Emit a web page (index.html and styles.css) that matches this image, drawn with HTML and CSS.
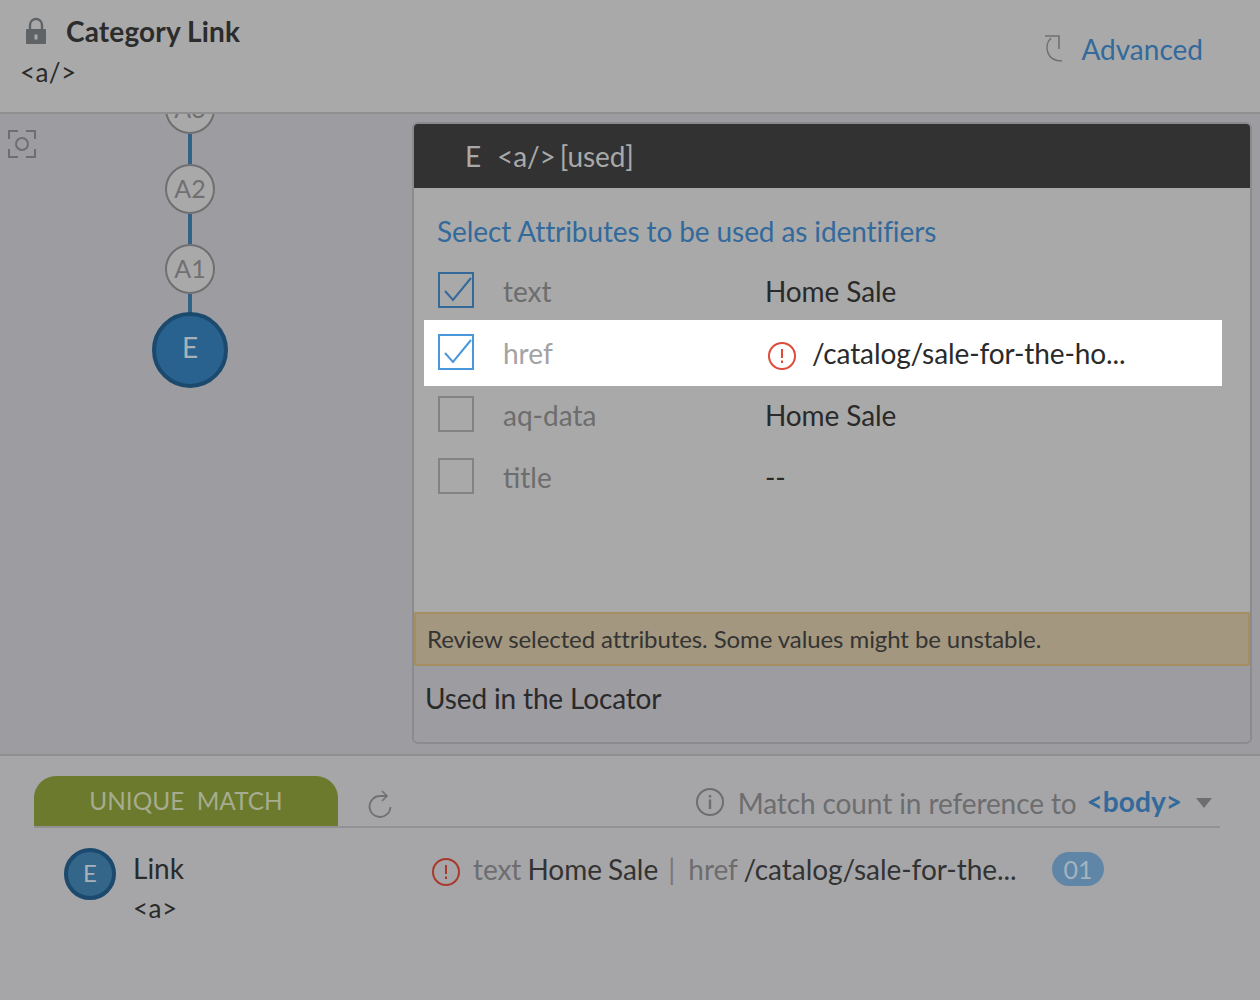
FILE: index.html
```html
<!DOCTYPE html>
<html lang="en">
<head>
<meta charset="utf-8">
<title>Category Link</title>
<link rel="stylesheet" href="styles.css">
</head>
<body>
<div class="page">
  <header class="top">
    <div class="top-left">
      <div class="title-row">
        <svg class="lock" viewBox="0 0 22 28" width="22" height="28"><path d="M5 13V8a6 6 0 0 1 12 0v5" fill="none" stroke="#5f6366" stroke-width="2.4"/><path fill-rule="evenodd" d="M2 12h18a1 1 0 0 1 1 1v13a1 1 0 0 1-1 1H2a1 1 0 0 1-1-1V13a1 1 0 0 1 1-1zm7.500 5.500v5h3v-5z" fill="#5f6366"/></svg>
        <span class="title">Category Link</span>
      </div>
      <div class="tag">&lt;a/&gt;</div>
    </div>
    <div class="advanced">
      <svg class="undo" viewBox="0 0 18 28" width="18" height="28"><path d="M0 1H14V14" fill="none" stroke="#707070" stroke-width="1.600"/><path d="M6 3C2 7 1 13 3 18C5 23 10 26 17 26" fill="none" stroke="#707070" stroke-width="1.600"/></svg>
      <span>Advanced</span>
    </div>
  </header>

  <main class="main">
    <aside class="graph">
      <svg class="focus" viewBox="0 0 28 28" width="28" height="28"><path d="M1 9V1h9M18 1h9v8M1 19v8h9M18 27h9v-8" fill="none" stroke="#6d6e72" stroke-width="2"/><circle cx="14" cy="14" r="6" fill="none" stroke="#6d6e72" stroke-width="2"/></svg>
      <div class="chain">
        <div class="node">A3</div>
        <div class="link"></div>
        <div class="node">A2</div>
        <div class="link"></div>
        <div class="node">A1</div>
        <div class="link short"></div>
        <div class="node-e">E</div>
      </div>
    </aside>

    <section class="panel">
      <div class="panel-head"><span class="head-e">E</span><span>&lt;a/&gt; [used]</span></div>
      <div class="panel-body">
        <h2 class="select-title">Select Attributes to be used as identifiers</h2>
        <div class="rows">
          <div class="row">
            <span class="check dark"><svg viewBox="0 0 36 36" width="36" height="36"><path d="M7 19l8 9L33 6" fill="none" stroke="#34699a" stroke-width="2"/></svg></span>
            <span class="key">text</span><span class="val">Home Sale</span>
          </div>
          <div class="row hl">
            <span class="check light"><svg viewBox="0 0 36 36" width="36" height="36"><path d="M7 19l8 9L33 6" fill="none" stroke="#4a98dc" stroke-width="2"/></svg></span>
            <span class="key">href</span>
            <span class="val warn-val"><svg class="warn" viewBox="0 0 28 28" width="28" height="28"><circle cx="14" cy="14" r="13" fill="none" stroke="#dd4b39" stroke-width="2"/><path d="M14 7v9M14 18.500v2.500" fill="none" stroke="#dd4b39" stroke-width="2"/></svg>/catalog/sale-for-the-ho...</span>
          </div>
          <div class="row">
            <span class="check"></span>
            <span class="key">aq-data</span><span class="val">Home Sale</span>
          </div>
          <div class="row">
            <span class="check"></span>
            <span class="key">title</span><span class="val">--</span>
          </div>
        </div>
      </div>
      <div class="notice">Review selected attributes. Some values might be unstable.</div>
      <div class="used">Used in the Locator</div>
    </section>
  </main>

  <footer class="bottom">
    <div class="tabs">
      <div class="tab">UNIQUE&nbsp; MATCH</div>
      <svg class="refresh" viewBox="0 0 24 28" width="24" height="28"><path d="M14 1l5 5-5 5" fill="none" stroke="#707174" stroke-width="1.600"/><path d="M18.500 6H12A10.500 10.500 0 1 0 22.500 17" fill="none" stroke="#707174" stroke-width="1.800"/></svg>
      <div class="ref">
        <svg viewBox="0 0 28 28" width="28" height="28"><circle cx="14" cy="14" r="13" fill="none" stroke="#6d6e70" stroke-width="2"/><path d="M14 11.500V21M14 7v2.400" fill="none" stroke="#6d6e70" stroke-width="2.400"/></svg>
        <span class="ref-text">Match count in reference to</span>
        <span class="ref-body">&lt;body&gt;</span>
        <span class="tri"></span>
      </div>
    </div>
    <div class="result">
      <div class="node-small">E</div>
      <div class="result-name">
        <div class="rn">Link</div>
        <div class="rt">&lt;a&gt;</div>
      </div>
      <div class="result-attrs">
        <svg viewBox="0 0 28 28" width="28" height="28"><circle cx="14" cy="14" r="13" fill="none" stroke="#a8392c" stroke-width="2"/><path d="M14 7v9M14 18.500v2.500" fill="none" stroke="#a8392c" stroke-width="2"/></svg>
        <span class="attrs-text"><span class="mute">text</span> Home Sale <span class="sep">|</span> <span class="mute">href</span> /catalog/sale-for-the...</span>
      </div>
      <div class="badge">01</div>
    </div>
  </footer>
</div>
</body>
</html>
```
FILE: styles.css
```css
* { box-sizing: border-box; }
html, body { margin: 0; padding: 0; }
body { font-family: Lato, "Liberation Sans", sans-serif; color: #2a2a2a; background: #a6a6a8; }
.page { width: 1260px; height: 1000px; display: flex; flex-direction: column; overflow: hidden; }

.top { height: 114px; flex: none; background: #a9a9a9; border-bottom: 2px solid #8f8f8f; display: flex; justify-content: space-between; padding: 16px 57px 0 21px; }
.title-row { display: flex; align-items: center; gap: 19px; padding-left: 4px; height: 30px; }
.lock { display: block; }
.title { font-size: 28px; font-weight: 700; color: #2c2c2c; line-height: 32px; letter-spacing: 0.15px; }
.tag { font-size: 26px; line-height: 32px; margin-top: 10px; color: #2a2a2a; letter-spacing: 0.4px; margin-left: -1px; }
.advanced { display: flex; align-items: center; gap: 18px; height: 40px; margin-top: 13px; font-size: 28px; color: #336a9c; }

.main { height: 640px; flex: none; background: #9d9ca1; display: flex; overflow: hidden; }
.graph { position: relative; width: 412px; flex: none; }
.focus { position: absolute; left: 8px; top: 16px; }
.chain { width: 380px; margin-top: -30px; display: flex; flex-direction: column; align-items: center; }
.node { width: 50px; height: 50px; border-radius: 50%; background: #a9a9a9; border: 2px solid #6f6f71; color: #707072; font-size: 25px; display: flex; align-items: center; justify-content: center; padding-bottom: 2px; flex: none; }
.link { width: 4px; height: 30px; background: #336289; flex: none; }
.link.short { height: 20px; }
.node-e { width: 76px; height: 76px; margin-top: -2px; border-radius: 50%; background: #2a628f; border: 4px solid #1b4a6e; color: #a9b1b8; font-size: 28px; display: flex; align-items: center; justify-content: center; padding-bottom: 6px; flex: none; }

.panel { width: 840px; height: 622px; margin-top: 8px; border: 2px solid #8b8b8d; border-radius: 6px; display: flex; flex-direction: column; overflow: hidden; }
.panel-head { height: 64px; flex: none; background: #323232; color: #a9a9a9; font-size: 28px; display: flex; align-items: center; padding: 0 0 0 51px; gap: 16px; letter-spacing: -0.1px; word-spacing: -3px; }
.panel-body { height: 424px; flex: none; background: #a9a9a9; padding: 25px 10px 0; }
.select-title { margin: 0 0 0 13px; font-size: 28px; line-height: 36px; font-weight: 400; color: #336a9c; letter-spacing: -0.1px; }
.rows { margin-top: 10px; display: flex; flex-direction: column; }
.row { height: 62px; display: flex; align-items: center; padding-left: 14px; width: 798px; font-size: 28px; }
.check { width: 36px; height: 36px; flex: none; border: 2px solid #838383; position: relative; }
.check svg { position: absolute; left: -2px; top: -2px; display: block; }
.check.dark { border-color: #34699a; }
.check.light { border-color: #4a98dc; }
.key { width: 263px; margin-left: 29px; color: #6d6d6d; line-height: 36px; margin-top: 2px; flex: none; }
.val { color: #2a2a2a; line-height: 36px; margin-top: 2px; white-space: nowrap; letter-spacing: -0.1px; margin-left: -1px; }
.warn-val { display: flex; align-items: center; padding-left: 3px; }
.warn { margin: 5px 16px 0 0; }
.row.hl { background: #fff; height: 66px; margin: -1px 0 -3px; padding-bottom: 2px; }
.row.hl .key { color: #a3a3a3; }

.notice { height: 54px; flex: none; background: #a3977f; border: 2px solid #a58f60; border-radius: 2px; font-size: 24px; line-height: 50px; padding-left: 11px; color: #343434; letter-spacing: -0.09px; }
.used { flex: 1; background: #9d9ca1; font-size: 28px; line-height: 36px; padding: 14px 0 0 11px; color: #2a2a2a; letter-spacing: -0.15px; }

.bottom { flex: 1; background: #a6a6a8; border-top: 2px solid #8f8f90; padding: 20px 40px 0 34px; }
.tabs { height: 52px; border-bottom: 2px solid #929294; display: flex; align-items: flex-end; }
.tab { width: 304px; height: 50px; background: #6b7a2c; border-radius: 22px 22px 0 0; color: #a7ab8f; font-size: 24.4px; text-align: center; line-height: 50px; }
.refresh { margin: 0 0 8px 30px; }
.ref { margin-left: auto; display: flex; align-items: center; height: 50px; padding-top: 4px; padding-right: 8px; }
.ref svg { position: relative; top: -1px; }
.ref-text { font-size: 28px; color: #6d6d6f; margin-left: 14px; letter-spacing: -0.1px; }
.ref-body { font-size: 28.100px; font-weight: 700; color: #336a9c; margin-left: 10px; position: relative; top: -2px; }
.tri { width: 0; height: 0; border-left: 8px solid transparent; border-right: 8px solid transparent; border-top: 10px solid #6e6e70; margin-left: 14px; }

.result { display: flex; align-items: flex-start; padding: 20px 0 0 30px; }
.node-small { width: 52px; height: 52px; border-radius: 50%; background: #336689; border: 4px solid #1b4a6e; color: #a9b1b8; font-size: 24px; display: flex; align-items: center; justify-content: center; padding-bottom: 3px; flex: none; }
.result-name { width: 299px; margin-left: 17px; flex: none; }
.rn { font-size: 28px; line-height: 40px; }
.rt { font-size: 26px; line-height: 40px; letter-spacing: 0.5px; }
.result-attrs { display: flex; align-items: center; gap: 13px; height: 44px; width: 620px; flex: none; }
.result-attrs svg { position: relative; top: 2px; }
.attrs-text { font-size: 28px; color: #333; white-space: nowrap; letter-spacing: -0.05px; word-spacing: -1px; position: relative; top: -1px; }
.mute { color: #6d6d6f; }
.sep { color: #77777a; margin: 0 7px 0 4px; }
.badge { width: 52px; height: 34px; border-radius: 17px; background: #5f86a6; color: #a4b3c0; font-size: 25px; text-align: center; line-height: 34px; margin-top: 4px; }
```
